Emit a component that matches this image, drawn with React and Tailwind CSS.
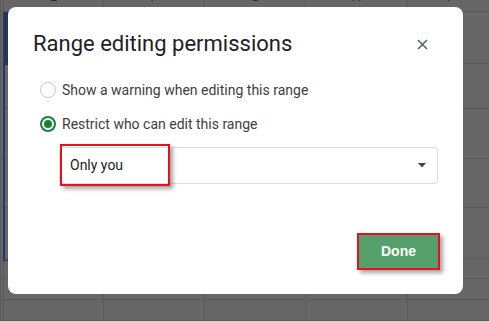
import React from "react";

const cols = [
  { w: "w-[3px]", label: "" },
  { w: "w-[100px]", label: "E" },
  { w: "w-[101px]", label: "F" },
  { w: "w-[101px]", label: "G" },
  { w: "w-[102px]", label: "H" },
  { w: "flex-1", label: "I" },
];

const rows = ["h-[53px]", "h-[45px]", "h-[50px]", "h-[50px]", "h-[51px]", "h-[21px]", "h-[21px]", "h-[21px]"];

const Sheet = () => (
  <div className="flex flex-col w-full h-full">
    {/* column header, mostly scrolled out of view */}
    <div className="flex h-[12px] border-b border-[#585858]">
      {cols.map((c, i) => (
        <div
          key={i}
          className={`${c.w} h-full overflow-hidden flex justify-center items-end border-l border-[#5a5a5a]`}
        >
          <span className="text-[13px] leading-none mb-[8px] text-[#2b2b2b]">{c.label}</span>
        </div>
      ))}
    </div>
    {rows.map((h, r) => (
      <div key={r} className={`flex ${h} border-b border-[#595959]`}>
        {cols.map((c, i) => (
          <div key={i} className={`${c.w} h-full border-l border-[#5a5a5a]`} />
        ))}
      </div>
    ))}
  </div>
);

const Radio = ({ checked, label }) => (
  <label className="flex items-center h-[20px] ml-[7px]">
    {checked ? (
      <span className="w-[16px] h-[16px] rounded-full border-2 border-[#188038] flex items-center justify-center">
        <span className="w-[8px] h-[8px] rounded-full bg-[#188038]" />
      </span>
    ) : (
      <span className="w-[16px] h-[16px] rounded-full border-[1.5px] border-[#c8c8c8]" />
    )}
    <span className="ml-[6px] text-[14px] text-[#3c4043]">{label}</span>
  </label>
);

export default function App() {
  return (
    <div
      className="relative w-[489px] h-[321px] bg-[#666666] overflow-hidden"
      style={{ fontFamily: "Roboto, 'Liberation Sans', sans-serif" }}
    >
      <Sheet />

      {/* selected range on the left edge */}
      <div className="absolute left-[3px] top-[12px] w-[20px] h-[249px] border-l-2 border-b border-[#1d3a6b]">
        <div className="h-[53px] bg-[#243656]" />
      </div>

      {/* dialog */}
      <div className="absolute left-[8px] top-[7px] w-[455px] h-[287px] rounded-lg bg-white flex flex-col">
        <div className="flex items-center justify-between pl-[25px] pr-[35px] pt-[23px]">
          <h1 className="text-[22px] leading-[28px] text-[#202124]">Range editing permissions</h1>
          <svg width="11" height="11" viewBox="0 0 11 11">
            <path d="M1 1L10 10M10 1L1 10" stroke="#5f6368" strokeWidth="1.6" />
          </svg>
        </div>

        <div className="flex flex-col gap-[14px] pl-[25px] mt-[22px]">
          <Radio label="Show a warning when editing this range" />
          <Radio checked label="Restrict who can edit this range" />
        </div>

        <div className="relative ml-[51px] mr-[25px] mt-[13px] h-[37px] border border-[#dadce0] rounded flex items-center justify-between pl-[10px] pr-[11px]">
          <span className="text-[14px] text-[#202124]">Only you</span>
          <svg width="8" height="5" viewBox="0 0 8 5">
            <path d="M0 0H8L4 4.5Z" fill="#444" />
          </svg>
          <div className="absolute left-0 top-[-4px] w-[110px] h-[42px] border-2 border-[#e8101a] shadow-[3px_3px_4px_rgba(0,0,0,0.35)]" />
        </div>

        <div className="flex-1" />

        <div className="flex justify-end pr-[23px] pb-[24px]">
          <button
            className="w-[83px] h-[37px] bg-[#55a06b] border-2 border-[#e8101a] text-white text-[14px] font-bold shadow-[3px_3px_4px_rgba(0,0,0,0.35)]"
            style={{ fontFamily: "'Liberation Sans', Arial, sans-serif" }}
          >
            Done
          </button>
        </div>
      </div>
    </div>
  );
}
